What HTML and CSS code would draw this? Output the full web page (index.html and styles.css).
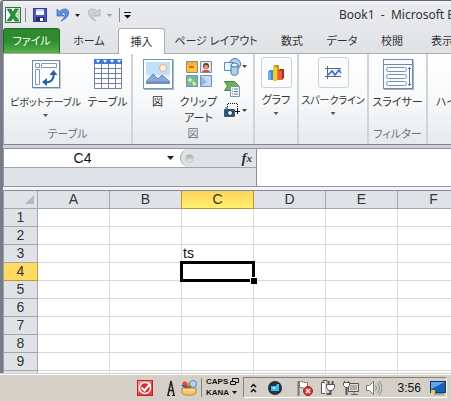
FILE: index.html
```html
<!DOCTYPE html>
<html lang="ja">
<head>
<meta charset="utf-8">
<title>Book1 - Microsoft Excel</title>
<link rel="stylesheet" href="styles.css">
</head>
<body>
<main class="window">
  <header class="titlebar">
    <div class="quick">
      <svg width="16" height="16" viewBox="0 0 16 16"><rect x=".5" y=".5" width="15" height="15" fill="#fff" stroke="#2b7a39"/><path d="M9 2h5v12H9M9 5h5M9 8h5M9 11h5" fill="#e3f1dd" stroke="#8fc08e"/><path d="M2 2h4l2 3 2-3h3L9.500 8 14 14h-4l-2-3-2 3H2l4-6z" fill="#279038" stroke="#176b2b" stroke-width=".5"/></svg>
      <i class="bar"></i>
      <button class="plain save" aria-label="保存"><svg width="14" height="14" viewBox="0 0 14 14"><rect x=".5" y=".5" width="13" height="13" fill="#4c56c4" stroke="#303a94"/><path d="M3 1h8v6H3z" fill="#f5f8ff"/><path d="M3 1h8v2H3z" fill="#b9cdf2"/><path d="M3 9h8v4H3z" fill="#252c64"/><path d="M7 10h3v3H7z" fill="#fff"/></svg></button>
      <button class="plain undo" aria-label="元に戻す"><svg width="24" height="14" viewBox="0 0 24 14"><path d="M1 1v7h7L5.500 5.500C8 4 9.500 5 9 7.500 8.500 9.500 7 11 5 13c5-2 8-5 7.500-9C12 0 7 0 3.500 3.500z" fill="#5d91df" stroke="#3465b5" stroke-width=".7"/><path d="M19 6h5l-2.500 3z" fill="#222"/></svg></button>
      <button class="plain redo" aria-label="やり直し"><svg width="24" height="14" viewBox="0 0 24 14"><path d="M12 1v7H5l2.500-2.500C5 4 3.500 5 4 7.500c.5 2 2 3.500 4 5.500C3 11 0 8 .5 4 1 0 6 0 9.500 3.500z" fill="#cfd2d6" stroke="#a4a8ad" stroke-width=".7"/><path d="M19 6h5l-2.500 3z" fill="#999"/></svg></button>
      <i class="bar"></i>
      <button class="plain" aria-label="カスタマイズ"><svg width="7" height="8" viewBox="0 0 7 8"><path d="M0 1h7v1H0zM0 4h7L3.500 7.500z" fill="#111"/></svg></button>
    </div>
    <h1 class="title">Book1&nbsp; -&nbsp; Microsoft Excel</h1>
  </header>

  <nav class="tabs">
    <button class="tab file">ファイル</button>
    <button class="tab home">ホーム</button>
    <button class="tab active">挿入</button>
    <button class="tab layout">ページ レイアウト</button>
    <button class="tab">数式</button>
    <button class="tab">データ</button>
    <button class="tab">校閲</button>
    <button class="tab">表示</button>
  </nav>

  <section class="ribbon">
    <div class="group g-table">
      <div class="tools">
        <button class="tool pivot">
          <svg width="32" height="32" viewBox="0 0 32 32"><rect x="2.500" y="2.500" width="27" height="27" fill="#fdfeff" stroke="#6d87a8"/><path d="M3 30.500h27.500V3" fill="none" stroke="#c5cbd3"/><path d="M5.500 5.500h4v4h-4zM11.500 5.500h15v4h-15zM5.500 11.500h4v15h-4z" fill="#fff" stroke="#8397b8"/><path d="M15 24c6 1 9-3 8.500-8" fill="none" stroke="#2d5caa" stroke-width="2"/><path d="M12 24l5-4v8zM23.500 12l-4 5h8z" fill="#2d5caa"/></svg>
          <span class="long">ピボットテーブル</span><i class="caret"></i>
        </button>
        <button class="tool table-tool">
          <svg width="32" height="32" viewBox="0 0 32 32"><rect x="2" y="2" width="28" height="29" fill="#fff"/><path d="M2 1h28v5H2z" fill="#3e76dc"/><path d="M4 2h4L6 5zM11 2h4l-2 3zM18 2h4l-2 3zM25 2h4l-2 3z" fill="#fff"/><path d="M2.500 6v24.500h27V6M9.500 6v24M16.500 6v24M23.500 6v24M2 10.500h28M2 15.500h28M2 20.500h28M2 25.500h28" fill="none" stroke="#71829f"/></svg>
          <span>テーブル</span>
        </button>
      </div>
      <div class="group-name">テーブル</div>
    </div>

    <div class="group g-art">
      <div class="tools">
        <button class="tool narrow">
          <svg width="32" height="32" viewBox="0 0 32 32"><rect x="1.500" y="1.500" width="29" height="29" fill="#fff" stroke="#6b9bb3"/><path d="M2 31.500h29.500V2" fill="none" stroke="#a8b5bd"/><path d="M4 4h24v20H4z" fill="#bfe0fb"/><path d="M4 17h24v7H4z" fill="#e3f3fd"/><circle cx="21" cy="10" r="3.500" fill="#fff2d8" stroke="#f0a878"/><path d="M4 24l7-8 5 5 4-4 8 7z" fill="#8ca9d8" stroke="#6582b8"/><path d="M4 24h24v2H4z" fill="#6b8dbd"/></svg>
          <span class="pic">図</span>
        </button>
        <button class="tool narrow">
          <svg width="32" height="32" viewBox="0 0 32 32"><g stroke="#7890a8"><path d="M3.500 3.500h11v11h-11z" fill="#ffc42e"/><path d="M17.500 3.500h11v11h-11z" fill="#e5e8e9"/><path d="M3.500 17.500h11v11h-11z" fill="#72b7a0"/><path d="M17.500 17.500h11v11h-11z" fill="#c6d9fb"/></g><path d="M4 4h10v3H4z" fill="#ffad30"/><path d="M6 8h5v2H6z" fill="#e75822"/><circle cx="23" cy="8" r="3" fill="#6b3f31"/><circle cx="23" cy="9" r="2" fill="#dca183"/><path d="M19 14c1-3 7-3 8 0z" fill="#d75232"/><path d="M7 19l1 2 2 1-2 1-1 2-1-2-2-1 2-1zM11 23l1 2 2 1-2 1-1 1-1-2-1-1 1-1z" fill="#e4f69b"/><path d="M18 18l6 6-6 4z" fill="#94b4ea"/></svg>
          <span>クリップ<br>アート</span>
        </button>
        <div class="small-tools">
          <button class="plain" aria-label="図形"><svg width="26" height="18" viewBox="0 0 26 18"><circle cx="12" cy="6" r="5.500" fill="#b8d4ee" stroke="#4275ab"/><path d="M1.500 4.500h9v8h-9z" fill="#edf5fc" stroke="#5c8abb"/><path d="M8 7v8c0 3 7 3 7 0V7" fill="#afd0ed" stroke="#4275ab"/><ellipse cx="11.500" cy="7" rx="3.500" ry="2" fill="#e5f3fd" stroke="#4275ab"/><path d="M19 7h5l-2.500 3z" fill="#444"/></svg></button>
          <button class="plain" aria-label="SmartArt"><svg width="26" height="18" viewBox="0 0 26 18"><path d="M1.500 1.500h10l4 4-4 5h-10l3-4.500z" fill="#70b25c" stroke="#46833b"/><path d="M7.500 6.500h9v10h-9z" fill="#f6fafd" stroke="#7c94aa"/><path d="M9 9h1m1 0h4M9 11.500h1m1 0h4M9 14h1m1 0h4" stroke="#57799b"/></svg></button>
          <button class="plain" aria-label="スクリーンショット"><svg width="26" height="18" viewBox="0 0 26 18"><path d="M4.500 5V1.500h10V8" fill="none" stroke="#111" stroke-dasharray="1 1"/><rect x="1" y="7" width="11" height="8" rx="1" fill="#38566f"/><path d="M2 5h3v2H2z" fill="#7fa2bb"/><circle cx="7" cy="11" r="2.500" fill="#e7f5ff" stroke="#173044"/><path d="M12 9.500h5M14.500 7v5" stroke="#111"/><path d="M19 7h5l-2.500 3z" fill="#444"/></svg></button>
        </div>
      </div>
      <div class="group-name">図</div>
    </div>

    <div class="group g-chart">
      <button class="tool boxed">
        <span class="box"><svg width="18" height="18" viewBox="0 0 18 18"><path d="M1 8l2-2h3v10H1z" fill="#398ad4"/><path d="M1 8h3v8H1z" fill="#6eb2eb"/><path d="M6 3l2-2h4v15H6z" fill="#c79413"/><path d="M6 3h4v14H6z" fill="#f5c934"/><path d="M11 7l2-2h4v9l-2 2h-4z" fill="#b92b16"/><path d="M11 7h4v9h-4z" fill="#f05a38"/></svg></span>
        <span>グラフ</span><i class="caret"></i>
      </button>
    </div>

    <div class="group g-spark">
      <button class="tool boxed">
        <span class="box"><svg width="18" height="18" viewBox="0 0 18 18"><path d="M4 5h13v7H4z" fill="#e6f1ff"/><path d="M3.500 2v13M1 4.500h16M1 12.500h16" stroke="#666"/><path d="M4 11l4-4 3 4 4-5 2 3" fill="none" stroke="#3766ce" stroke-width="1.500"/></svg></span>
        <span class="long">スパークライン</span><i class="caret"></i>
      </button>
    </div>

    <div class="group g-filter">
      <div class="tools">
        <button class="tool slicer">
          <svg width="32" height="32" viewBox="0 0 32 32"><rect x="1.500" y="1.500" width="29" height="29" fill="#f7faff" stroke="#7288a7"/><path d="M2 31.500h29.500V2" fill="none" stroke="#a7b0bf"/><path d="M1 6.500h30" stroke="#7288a7"/><g fill="#fff" stroke="#6f8fbd"><rect x="4.500" y="9.500" width="20" height="4" rx="2"/><rect x="4.500" y="16.500" width="20" height="4" rx="2"/><rect x="4.500" y="23.500" width="20" height="4" rx="2"/></g><path d="M27.500 9v19M26 10.500h3M26 26.500h3" stroke="#5577a8"/></svg>
          <span>スライサー</span>
        </button>
      </div>
      <div class="group-name">フィルター</div>
    </div>
    <div class="group g-link"><button class="tool link"><span>ハイパーリンク</span></button></div>
  </section>

  <section class="formula">
    <div class="name-side">
      <div class="name-row">
        <input class="name-box" aria-label="名前ボックス" value="C4">
        <button class="plain drop" aria-label="名前の一覧"><i class="caret dark"></i></button>
        <div class="slider"><i class="knob"></i><button class="plain fx">f<sub>x</sub></button></div>
      </div>
    </div>
    <textarea class="entry" aria-label="数式バー"></textarea>
  </section>

  <section class="sheet">
    <table>
      <colgroup><col class="rows"><col><col><col><col><col><col></colgroup>
      <thead><tr><th class="corner"><svg width="9" height="9" viewBox="0 0 9 9"><path d="M9 0v9H0z" fill="#b6babf"/></svg></th><th>A</th><th>B</th><th class="on">C</th><th>D</th><th>E</th><th>F</th></tr></thead>
      <tbody>
        <tr><th>1</th><td></td><td></td><td></td><td></td><td></td><td></td></tr>
        <tr><th>2</th><td></td><td></td><td></td><td></td><td></td><td></td></tr>
        <tr><th>3</th><td></td><td></td><td>ts</td><td></td><td></td><td></td></tr>
        <tr><th class="on">4</th><td></td><td></td><td class="selected"></td><td></td><td></td><td></td></tr>
        <tr><th>5</th><td></td><td></td><td></td><td></td><td></td><td></td></tr>
        <tr><th>6</th><td></td><td></td><td></td><td></td><td></td><td></td></tr>
        <tr><th>7</th><td></td><td></td><td></td><td></td><td></td><td></td></tr>
        <tr><th>8</th><td></td><td></td><td></td><td></td><td></td><td></td></tr>
        <tr><th>9</th><td></td><td></td><td></td><td></td><td></td><td></td></tr>
        <tr><th></th><td></td><td></td><td></td><td></td><td></td><td></td></tr>
      </tbody>
    </table>
  </section>
</main>

<footer class="taskbar">
  <div class="ime">
    <svg width="16" height="16" viewBox="0 0 16 16"><rect x=".5" y=".5" width="15" height="15" fill="#ed3c3c" stroke="#c61d22"/><path d="M1 1h14L1 13z" fill="#fa8b84"/><circle cx="8" cy="8" r="5.500" fill="#d72c30" stroke="#fff" stroke-width="1.500"/><path d="M4.500 7.500l3 3 6-7" fill="none" stroke="#fff" stroke-width="2"/></svg>
    <svg class="letter" width="8" height="16" viewBox="0 0 8 16"><path d="M1 15L4 1l3 14M2 10.500h4" fill="none" stroke="#222" stroke-width="1.500"/><path d="M0 15.500h3M5 15.500h3" stroke="#222"/></svg>
    <svg width="16" height="16" viewBox="0 0 16 16"><path d="M1 3l3-2 6 7-3 1z" fill="#e4442c"/><path d="M1 5l7 4" stroke="#2447a4" stroke-width="2"/><path d="M6 2l4 6" stroke="#f49b23" stroke-width="2"/><circle cx="12" cy="4" r="3.500" fill="#abd7fa" stroke="#4e8bc5"/><path d="M10 6L7 9" stroke="#555" stroke-width="1.500"/><path d="M1 8h14v5c-2 3-12 3-14 0z" fill="#f3c769" stroke="#bb812b"/><path d="M2 10h12" stroke="#fff0b5"/></svg>
  </div>
  <div class="lang"><span>CAPS</span><svg width="9" height="8" viewBox="0 0 9 8"><path d="M2.500 3V.5h6v4H6M.5 3.500h5v3h-5z" fill="none" stroke="#111"/></svg><span>KANA</span><svg width="9" height="8" viewBox="0 0 9 8"><path d="M2 2h5L4.500 5z" fill="#111"/></svg></div>
  <div class="tray">
    <button class="plain chevrons" aria-label="隠れているアイコン"><svg width="7" height="10" viewBox="0 0 7 10"><path d="M1 4l2.500-2.500L6 4M1 9l2.500-2.500L6 9" fill="none" stroke="#111" stroke-width="1.500"/></svg></button>
    <svg class="orb" width="14" height="14" viewBox="0 0 14 14"><circle cx="7" cy="7" r="7" fill="#263138"/><path d="M3 5h5l1-2h2v7H3z" fill="#39bdf2"/><circle cx="6" cy="7" r="1" fill="#fff"/></svg>
    <svg width="16" height="16" viewBox="0 0 16 16"><path d="M1.500 1v15" stroke="#777" stroke-width="2"/><path d="M2.500 1.500c3-1 4 2 8 1v6c-4 1-5-2-8-1z" fill="#fff" stroke="#777"/><circle cx="11" cy="11" r="4.500" fill="#df3630" stroke="#a91e1c"/><path d="M9 9l4 4m0-4l-4 4" stroke="#fff" stroke-width="1.500"/></svg>
    <svg width="16" height="16" viewBox="0 0 16 16"><path d="M5 2.500H1.500v11H5M3 2V.5h4V2" fill="#fff" stroke="#555"/><path d="M8.500 5V1M12.500 5V1" stroke="#555" stroke-width="2"/><path d="M6.500 4.500h8v3l-2 3h-4l-2-3z" fill="#fff" stroke="#555"/><path d="M10.500 10v4h-4" fill="none" stroke="#555" stroke-width="2"/></svg>
    <svg width="16" height="16" viewBox="0 0 16 16"><path d="M5.500 3.500h10v8h-10z" fill="#ddd" stroke="#555"/><path d="M7 5h7v5H7z" fill="#aeaeac"/><path d="M8 14.500h7M11 12v2" stroke="#666"/><path d="M1.500 3V1M5.500 3V1" stroke="#555"/><path d="M.5 2.500h6v3l-2 2h-2l-2-2z" fill="#fff" stroke="#555"/><path d="M3.500 8v7" stroke="#555" stroke-width="2"/></svg>
    <svg width="16" height="16" viewBox="0 0 16 16"><path d="M.5 5.500h3l4-4v13l-4-4h-3z" fill="#fff" stroke="#777"/><path d="M9.500 5q2 3 0 6M11.500 3q4 5 0 10M13.500 1q5 7 0 14" fill="none" stroke="#888"/></svg>
    <time>3:56</time>
    <svg width="16" height="14" viewBox="0 0 16 14"><rect x=".5" y=".5" width="15" height="11" fill="#185fba" stroke="#17365f"/><path d="M1 1h14L1 8z" fill="#60a7e9"/><path d="M1 9h4v3H1z" fill="#ffc12e"/><path d="M4 13h10" stroke="#576a7e"/></svg>
  </div>
</footer>
</body>
</html>
```
FILE: styles.css
```css
* { box-sizing: border-box; }
html { height: 100%; }
body {
  margin: 0; height: 100%; display: flex; flex-direction: column; overflow: hidden;
  font: 11px/16px "Noto Sans", "Noto Sans CJK JP", sans-serif;
  font-feature-settings: "palt"; color: #333; background: #d4d0c8;
}
button { font: inherit; font-feature-settings: inherit; color: inherit; border: 0; background: none; padding: 0; white-space: nowrap; }
svg { display: block; flex: none; }
.window {
  flex: 1; min-height: 0; overflow: hidden; display: flex; flex-direction: column;
  border-top: 1px solid #62656f; border-left: 3px solid #777d88; background: #dfe3e8; border-top-left-radius: 4px;
}
.plain { display: flex; align-items: center; justify-content: center; }
.titlebar { height: 27px; flex: none; display: flex; align-items: center; justify-content: space-between; background: linear-gradient(#f2f3f5, #e8eaed 4px, #e5e7ea); }
.quick { display: flex; align-items: center; padding-left: 2px; gap: 4px; }
.bar { width: 1px; height: 14px; background: #888b90; }
.save { margin: 0 4px 0 3px; }
.undo { margin-left: 1px; }
.redo { margin: 0 3px 0 4px; }
.title { margin: 0; font-size: 12px; font-weight: 400; line-height: 16px; white-space: nowrap; flex: none; width: 112px; }

.tabs { height: 26px; flex: none; display: flex; align-items: flex-end; border-bottom: 1px solid #a9adb3; background: linear-gradient(#e5e7ea, #dfe3e6); }
.tab { width: 50px; height: 25px; flex: none; display: flex; align-items: center; justify-content: center; }
.tab.home { width: 58px; }
.tab.layout { width: 102px; }
.tab.file { width: 57px; color: #fff; border: 1px solid #1c6b22; border-bottom: 0; border-radius: 3px 3px 0 0; background: linear-gradient(#30872f, #2d8c2e 50%, #57b348); }
.tab.active { height: 26px; margin: 0 0 -1px 0; width: 47px; border: 1px solid #a9adb3; border-bottom: 0; border-radius: 3px 3px 0 0; background: #fff; }

.ribbon { height: 91px; flex: none; display: flex; border-left: 1px solid #9da1a8; border-bottom: 1px solid #81858f; background: linear-gradient(#fff, #f8f9fa 50%, #e6e9ed); overflow: hidden; }
.group { flex: none; display: flex; flex-direction: column; justify-content: space-between; align-items: center; border-right: 2px solid #d0d3d8; }
.g-table { width: 129px; }
.g-art { width: 122px; }
.g-chart { width: 44px; }
.g-spark { width: 70px; }
.g-filter { width: 59px; }
.g-link { border: 0; padding: 36px 0 0 8px; }
.tools { display: flex; }
.tool { display: flex; flex-direction: column; align-items: center; padding-top: 4px; }
.tool > svg { margin-bottom: 4px; }
.long { font-size: 10px; }
.pivot { width: 80px; }
.table-tool { width: 44px; }
.narrow { width: 41px; }
.small-tools { display: flex; flex-direction: column; gap: 4px; padding: 4px 0 0 4px; }
.group-name { color: #6b7280; height: 18px; line-height: 16px; }
.boxed { padding-top: 3px; }
.box { width: 31px; height: 31px; margin-bottom: 4px; border: 1px solid #cdd1d6; border-radius: 3px; display: flex; align-items: center; justify-content: center; background: #fbfcfd; }
.caret { width: 5px; height: 3px; margin-top: 4px; background: #555; clip-path: polygon(0 0, 100% 0, 50% 100%); }
.caret.dark { width: 7px; height: 4px; margin: 0; background: #222; }

.formula { height: 45px; flex: none; display: flex; border-top: 3px solid #ced2d8; border-bottom: 3px solid #f2f4f7; }
.name-side { width: 254px; flex: none; border: 1px solid #9296a0; border-right-color: #8a8e98; }
.name-row { height: 19px; display: flex; border-bottom: 1px solid #9fa3aa; background: #fff; }
.name-box { flex: 1; min-width: 0; border: 0; padding: 0; text-align: center; font: 14px/18px "Liberation Sans", sans-serif; color: #111; background: transparent; outline: 0; }
.drop { width: 19px; }
.slider { width: 76px; display: flex; align-items: center; justify-content: space-between; padding: 0 4px; background: #dfe3e8; border-left: 1px solid #9fa3aa; border-radius: 9px 0 0 9px; }
.knob { width: 9px; height: 9px; border-radius: 50%; background: linear-gradient(#aaa, #eee); border: 1px solid #c1c3c6; }
.fx { font: italic bold 15px/16px "Liberation Serif", serif; }
.fx sub { font-size: 11px; line-height: 8px; vertical-align: baseline; }
.entry { flex: 1; min-width: 0; resize: none; border: 0; border-top: 1px solid #9296a0; border-bottom: 1px solid #9296a0; background: #fff; outline: 0; }

.sheet { flex: 1; min-height: 0; overflow: hidden; background: #fff; border-top: 1px solid #858994; border-left: 1px solid #9ba0a7; }
table { table-layout: fixed; width: 466px; border-collapse: separate; border-spacing: 0; font: 14px/17px "Liberation Sans", sans-serif; }
col { width: 72px; }
col.rows { width: 34px; }
th, td { height: 18px; padding: 0; border-right: 1px solid #d8dadc; border-bottom: 1px solid #d8dadc; }
th { font-weight: 400; background: #dfe3e8; border-color: #a3a8ae; }
thead th.on { background: linear-gradient(#ffd35b, #fff06e); border-color: #bd912d; box-shadow: -1px 0 #bd912d; }
tbody th.on { background: #ffdc61; border-color: #c6962f; }
.corner svg { margin: 0 3px 0 auto; }
td { color: #111; padding-left: 1px; }
.selected { position: relative; }
.selected::before { content: ""; position: absolute; inset: -2px; border: 3px solid #000; }
.selected::after { content: ""; position: absolute; right: -4px; bottom: -4px; width: 6px; height: 6px; background: #000; border: 1px solid #fff; border-width: 1px 0 0 1px; }

.taskbar { height: 28px; flex: none; display: flex; justify-content: flex-end; align-items: center; padding: 0 4px 0 0; border-top: 1px solid #d4d0c8; box-shadow: inset 0 1px #fff; background: #d4d0c8; }
.ime { display: flex; align-items: center; }
.letter { margin: 0 6px 0 14px; }
.lang { display: grid; grid-template-columns: 24px 9px; row-gap: 3px; align-items: center; margin: 0 4px; padding-left: 4px; border-left: 1px solid #85827c; font: bold 8px/8px "Liberation Sans", sans-serif; color: #111; }
.tray { width: 204px; height: 21px; display: flex; align-items: center; justify-content: space-between; padding-left: 6px; border: 1px solid #fff; border-top-color: #85827c; border-left-color: #85827c; }
.orb { margin: 0 8px 0 4px; }
time { font: 12px/16px "Liberation Sans", sans-serif; color: #111; margin: 0 2px 0 8px; }
```
